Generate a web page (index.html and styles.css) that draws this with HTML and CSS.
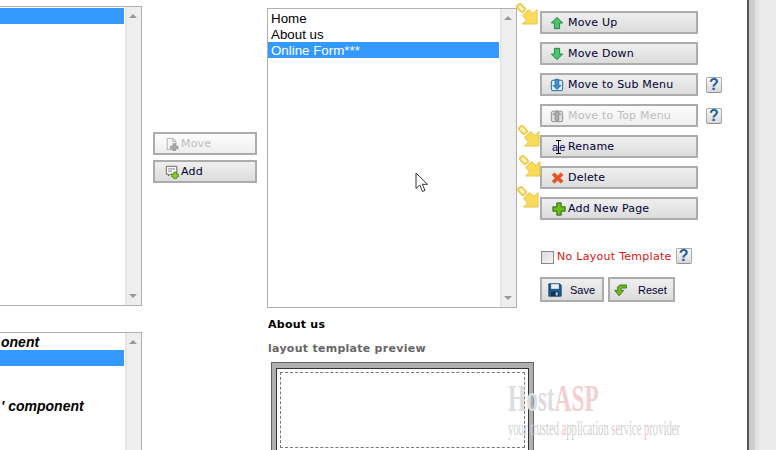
FILE: index.html
```html
<!DOCTYPE html>
<html lang="en">
<head>
    <meta charset="UTF-8">
    <meta name="viewport" content="width=device-width, initial-scale=1.0">
    <title>Menu Manager</title>
    <link rel="stylesheet" href="styles.css">
</head>
<body>
    <svg class="defs" width="0" height="0">
        <symbol id="callout" viewBox="0 0 22 22">
            <rect x="1" y="2.500" width="8" height="5" rx="1" transform="rotate(45 5 5)" fill="#fff6c4" stroke="#efca4a" stroke-width="2"/>
            <path d="M21 21H6.500L10.500 17 6.500 12.500 12.500 6.500 17 10.500 21 6.500Z" fill="#f8dc58" stroke="#e8c24e" stroke-width="1"/>
        </symbol>
    </svg>

    <div class="page">
        <div class="content">
            <div class="col-left">
                <div class="list list-top">
                    <ul class="items">
                        <li class="selected">&nbsp;</li>
                    </ul>
                    <div class="scrollbar"><span class="up"></span><span class="down"></span></div>
                </div>
                <div class="list list-bottom">
                    <ul class="items">
                        <li class="heading">onent</li>
                        <li class="selected">&nbsp;</li>
                        <li>&nbsp;</li>
                        <li>&nbsp;</li>
                        <li class="heading">' component</li>
                    </ul>
                    <div class="scrollbar"><span class="up"></span></div>
                </div>
            </div>

            <div class="col-mid">
                <button class="btn btn-wide" disabled>
                    <svg class="icon" viewBox="0 0 16 16"><path d="M2.500 1.500H9L12.500 5V14.500H2.500Z" fill="#f4f4f4" stroke="#aaa"/><path d="M9 1.500V5H12.500" fill="none" stroke="#aaa"/><path d="M9 7.500H12V10.500H15V13.500H12V16H9V13.500H6V10.500H9Z" fill="#aaa" stroke="#888" stroke-width=".6"/></svg>
                    Move
                </button>
                <button class="btn btn-wide">
                    <svg class="icon" viewBox="0 0 16 16"><path d="M1.500 1.500H13.500V10.500H6L4 12.500V10.500H1.500Z" fill="#f6f6f6" stroke="#555"/><path d="M3.500 4.500H11.500M3.500 7H8" stroke="#777"/><path d="M10 8H13V10.500H15.500V13.500H13V16H10V13.500H7.500V10.500H10Z" fill="#8ccf1e" stroke="#3f7d12" stroke-width=".8"/></svg>
                    Add
                </button>
            </div>

            <div class="col-main">
                <div class="list list-pages">
                    <ul class="items">
                        <li>Home</li>
                        <li>About us</li>
                        <li class="selected">Online Form***</li>
                    </ul>
                    <div class="scrollbar"><span class="up"></span><span class="down"></span></div>
                </div>
                <h4 class="page-name">About us</h4>
                <h4 class="preview-title">layout template preview</h4>
                <div class="preview">
                    <div class="preview-inner">
                        <div class="preview-dash"></div>
                    </div>
                </div>
            </div>

            <div class="col-actions">
                <div class="action-row">
                    <button class="btn btn-action">
                        <svg class="icon" viewBox="0 0 16 16"><path d="M8 1.500L14.500 8H11V14.500H5V8H1.500Z" fill="#4cc46a" stroke="#14803a"/></svg>
                        Move Up
                    </button>
                    <svg class="callout callout-up"><use href="#callout"/></svg>
                </div>
                <div class="action-row">
                    <button class="btn btn-action">
                        <svg class="icon" viewBox="0 0 16 16"><path d="M8 14.500L1.500 8H5V1.500H11V8H14.500Z" fill="#4cc46a" stroke="#14803a"/></svg>
                        Move Down
                    </button>
                </div>
                <div class="action-row">
                    <button class="btn btn-action">
                        <svg class="icon" viewBox="0 0 16 16"><rect x="1.500" y="2.500" width="13" height="12" rx="2" fill="#d8ecfa" stroke="#14588f"/><path d="M8 13L3.500 8.500H6V1.500H10V8.500H12.500Z" fill="#3b93d6" stroke="#14588f" stroke-width=".8"/></svg>
                        Move to Sub Menu
                    </button>
                    <span class="help">?</span>
                </div>
                <div class="action-row">
                    <button class="btn btn-action" disabled>
                        <svg class="icon" viewBox="0 0 16 16"><rect x="1.500" y="2.500" width="13" height="12" rx="2" fill="#ddd" stroke="#888"/><path d="M8 1.500L12.500 6.500H10V13H6V6.500H3.500Z" fill="#aaa" stroke="#888" stroke-width=".8"/></svg>
                        Move to Top Menu
                    </button>
                    <span class="help">?</span>
                </div>
                <div class="action-row">
                    <button class="btn btn-action">
                        <span class="icon rename-icon">a<i class="caret"></i>e</span>
                        Rename
                    </button>
                    <svg class="callout callout-rename"><use href="#callout"/></svg>
                </div>
                <div class="action-row">
                    <button class="btn btn-action">
                        <svg class="icon" viewBox="0 0 16 16"><path d="M2.500 4.500L5 2 8.700 5.500 12.500 2 15 4.500 11.500 8 15 11.500 12.500 14 8.700 10.500 5 14 2.500 11.500 6 8Z" fill="#e8501e" stroke="#d8703e" stroke-width="1"/></svg>
                        Delete
                    </button>
                    <svg class="callout callout-delete"><use href="#callout"/></svg>
                </div>
                <div class="action-row">
                    <button class="btn btn-action btn-add">
                        <svg class="icon" viewBox="0 0 16 16"><path d="M5.500 1H10.500V5.500H15V10.500H10.500V15H5.500V10.500H1V5.500H5.500Z" fill="#69bd18" stroke="#245c10"/></svg>
                        Add New Page
                    </button>
                    <svg class="callout callout-add"><use href="#callout"/></svg>
                </div>

                <div class="template-row">
                    <span class="checkbox"></span>
                    <span class="template-label">No Layout Template</span>
                    <span class="help">?</span>
                </div>

                <div class="form-buttons">
                    <button class="btn btn-form btn-save">
                        <svg class="icon" viewBox="0 0 18 18"><path d="M1 1H15L17 3V17H1Z" fill="#1f5c8e" stroke="#123f66"/><rect x="4" y="1.500" width="10" height="6" fill="#e8eef4"/><rect x="4" y="11" width="10" height="6" fill="#0e3657"/><rect x="10" y="12" width="2.500" height="4" fill="#cfd9e2"/></svg>
                        Save
                    </button>
                    <button class="btn btn-form btn-reset">
                        <svg class="icon" viewBox="0 0 18 18"><path d="M1 9.500H4.500V7C4.500 4 6.500 2.500 9.500 2.500H16V6.500H10.500C9.500 6.500 9 7 9 8V9.500H12.500L6.500 16.500Z" fill="#6fbb1c" stroke="#2a6510"/></svg>
                        Reset
                    </button>
                </div>
            </div>

            <div class="watermark">
                <div class="wm-logo">Host<span class="wm-red">ASP</span></div>
                <div class="wm-tag">your trusted <span class="wm-red">a</span>pplication <span class="wm-red">s</span>ervice <span class="wm-red">p</span>rovider</div>
            </div>

            <svg class="pointer" width="14" height="21" viewBox="0 0 14 21"><path d="M1 1V16.500L4.800 13 7.500 19.500 10 18.500 7.300 12.300H12.500Z" fill="#fff" stroke="#333"/></svg>
        </div>
        <div class="rail"></div>
    </div>
</body>
</html>
```

FILE: styles.css
```css
body {
    margin: 0;
    padding: 0;
    background: #fff;
    font-family: "DejaVu Sans", Verdana, sans-serif;
    font-size: 11px;
}
.defs {
    position: absolute;
}
.page {
    display: flex;
    width: 776px;
    height: 450px;
    overflow: hidden;
}
.content {
    position: relative;
    display: flex;
    width: 747px;
    flex: none;
}
.rail {
    flex: 1;
    border-left: 2px solid #555;
    background: linear-gradient(to right, #ccc 0, #ccc 5px, #dedede 6px, #ebebeb 12px);
}

/* columns */
.col-left {
    width: 152px;
    margin-left: -10px;
    padding-top: 6px;
    flex: none;
}
.col-mid {
    width: 104px;
    margin-left: 11px;
    padding-top: 132px;
    flex: none;
}
.col-main {
    width: 250px;
    margin-left: 10px;
    padding-top: 8px;
    flex: none;
}
.col-actions {
    width: 182px;
    margin-left: 23px;
    padding-top: 11px;
    flex: none;
}

/* list boxes */
.list {
    display: flex;
    box-sizing: border-box;
    border: 1px solid #b0b0b0;
    background: #fff;
    font-family: "Liberation Sans", Arial, sans-serif;
    font-size: 13.330px;
}
.list-top {
    height: 300px;
}
.list-bottom {
    height: 200px;
    margin-top: 26px;
}
.list-pages {
    height: 300px;
}
.items {
    flex: 1;
    list-style: none;
    margin: 0 1px 0 0;
    padding: 1px 0 0;
}
.items li {
    height: 16px;
    line-height: 18px;
    padding-left: 3px;
    white-space: nowrap;
}
.list-bottom .items li {
    padding-left: 10px;
}
.items li.selected {
    background: #3399ff;
    color: #fff;
}
.items li.heading {
    line-height: 16px;
    font-size: 14px;
    font-weight: bold;
    font-style: italic;
}
.scrollbar {
    display: flex;
    flex-direction: column;
    justify-content: space-between;
    align-items: center;
    box-sizing: border-box;
    width: 16px;
    padding: 7px 0 7px;
    background: linear-gradient(to right, #e2e2e2, #eee 3px);
}
.scrollbar span {
    width: 0;
    height: 0;
    border-left: 4px solid transparent;
    border-right: 4px solid transparent;
}
.scrollbar .up {
    border-bottom: 4px solid #999;
}
.scrollbar .down {
    border-top: 4px solid #999;
}

/* buttons */
.btn {
    display: flex;
    align-items: center;
    box-sizing: border-box;
    margin: 0;
    border: 2px solid #acacac;
    background: linear-gradient(to bottom, #efefef, #dcdcdc);
    color: #000033;
    font-family: "DejaVu Sans", Verdana, sans-serif;
    font-size: 11px;
    letter-spacing: 0.2px;
    cursor: pointer;
}
.btn:disabled {
    background: linear-gradient(to bottom, #fdfdfd, #eeeeee);
    color: #bdbdbd;
    cursor: default;
}
.btn-wide {
    width: 104px;
    height: 23px;
    margin-bottom: 5px;
    padding: 0 0 0 10px;
    gap: 2px;
}
.btn-action {
    width: 158px;
    height: 23px;
    padding: 0 0 0 8px;
    gap: 4px;
}
.btn-add {
    gap: 2px;
    padding-left: 10px;
}
.btn-form {
    height: 25px;
    font-family: "Liberation Sans", Arial, sans-serif;
    font-size: 11px;
    letter-spacing: 0;
}
.btn-save {
    width: 64px;
    padding-left: 6px;
    gap: 8px;
}
.btn-reset {
    width: 67px;
    padding-left: 4px;
    gap: 10px;
}
.icon {
    display: block;
    width: 14px;
    height: 14px;
    flex: none;
}
.rename-icon {
    position: relative;
    margin-left: 2px;
    margin-right: -2px;
    color: #000080;
    font-family: "Liberation Sans", Arial, sans-serif;
    font-size: 11px;
    letter-spacing: 1.200px;
    line-height: 14px;
    white-space: nowrap;
}
.caret {
    position: absolute;
    left: 6px;
    top: 0;
    width: 1px;
    height: 14px;
    background: #000;
}
.caret::before,
.caret::after {
    content: "";
    position: absolute;
    left: -2px;
    width: 5px;
    height: 1px;
    background: #000;
}
.caret::before {
    top: 0;
}
.caret::after {
    bottom: 0;
}

.action-row {
    position: relative;
    display: flex;
    align-items: center;
    gap: 8px;
    height: 23px;
    margin-bottom: 8px;
}
.help {
    display: block;
    box-sizing: border-box;
    width: 16px;
    height: 16px;
    border: 1px solid #a8a8a8;
    border-bottom-color: #8f8f8f;
    border-radius: 2px;
    background: linear-gradient(to bottom, #fafafa, #d8d8d8);
    color: #1d5f9e;
    font-family: "Liberation Sans", Arial, sans-serif;
    font-size: 16px;
    font-weight: bold;
    line-height: 14px;
    text-align: center;
}

.template-row {
    display: flex;
    height: 16px;
    margin-top: 28px;
    padding-left: 1px;
}
.checkbox {
    box-sizing: border-box;
    width: 13px;
    height: 13px;
    margin-top: 3px;
    border: 1px solid #8a8a8a;
    background: linear-gradient(135deg, #dcdcdc, #f4f4f4);
}
.template-label {
    margin: 2px 4px 0 3px;
    color: #e01010;
    letter-spacing: 0.28px;
}
.form-buttons {
    display: flex;
    gap: 4px;
    margin-top: 13px;
}

/* page name and preview */
.page-name {
    margin: 10px 0 0 1px;
    font-size: 11px;
    line-height: 14px;
    letter-spacing: 0.25px;
    color: #000;
}
.preview-title {
    margin: 10px 0 0 1px;
    font-size: 11px;
    line-height: 14px;
    letter-spacing: 0.27px;
    color: #666;
}
.preview {
    box-sizing: border-box;
    width: 263px;
    height: 120px;
    margin: 6px 0 0 4px;
    padding: 5px 4px;
    border: 1px solid #666;
    background: #b0b0b0;
}
.preview-inner {
    box-sizing: border-box;
    height: 100%;
    padding: 3px;
    border: 1px solid #333;
    background: #fff;
}
.preview-dash {
    box-sizing: border-box;
    height: 76px;
    border: 1px dashed #777;
}

/* overlays */
.callout {
    position: absolute;
    width: 22px;
    height: 22px;
}
.callout-up {
    left: -24px;
    top: -8px;
}
.callout-rename {
    left: -22px;
    top: -10px;
}
.callout-delete {
    left: -21px;
    top: -11px;
}
.callout-add {
    left: -23px;
    top: -11px;
}
.pointer {
    position: absolute;
    left: 415px;
    top: 172px;
}
.watermark {
    position: absolute;
    left: 508px;
    top: 381px;
    color: #dddddd;
    font-family: "Liberation Serif", "Times New Roman", serif;
    white-space: nowrap;
}
.wm-logo {
    font-size: 37px;
    font-weight: bold;
    line-height: 36px;
    transform: scaleX(0.63);
    transform-origin: left top;
}
.wm-tag {
    margin-top: 1px;
    color: #cfcfcf;
    font-size: 20px;
    line-height: 20px;
    transform: scaleX(0.53);
    transform-origin: left top;
}
.wm-logo .wm-red {
    color: #f3d0d0;
}
.wm-tag .wm-red {
    color: #eec4c4;
}
```
